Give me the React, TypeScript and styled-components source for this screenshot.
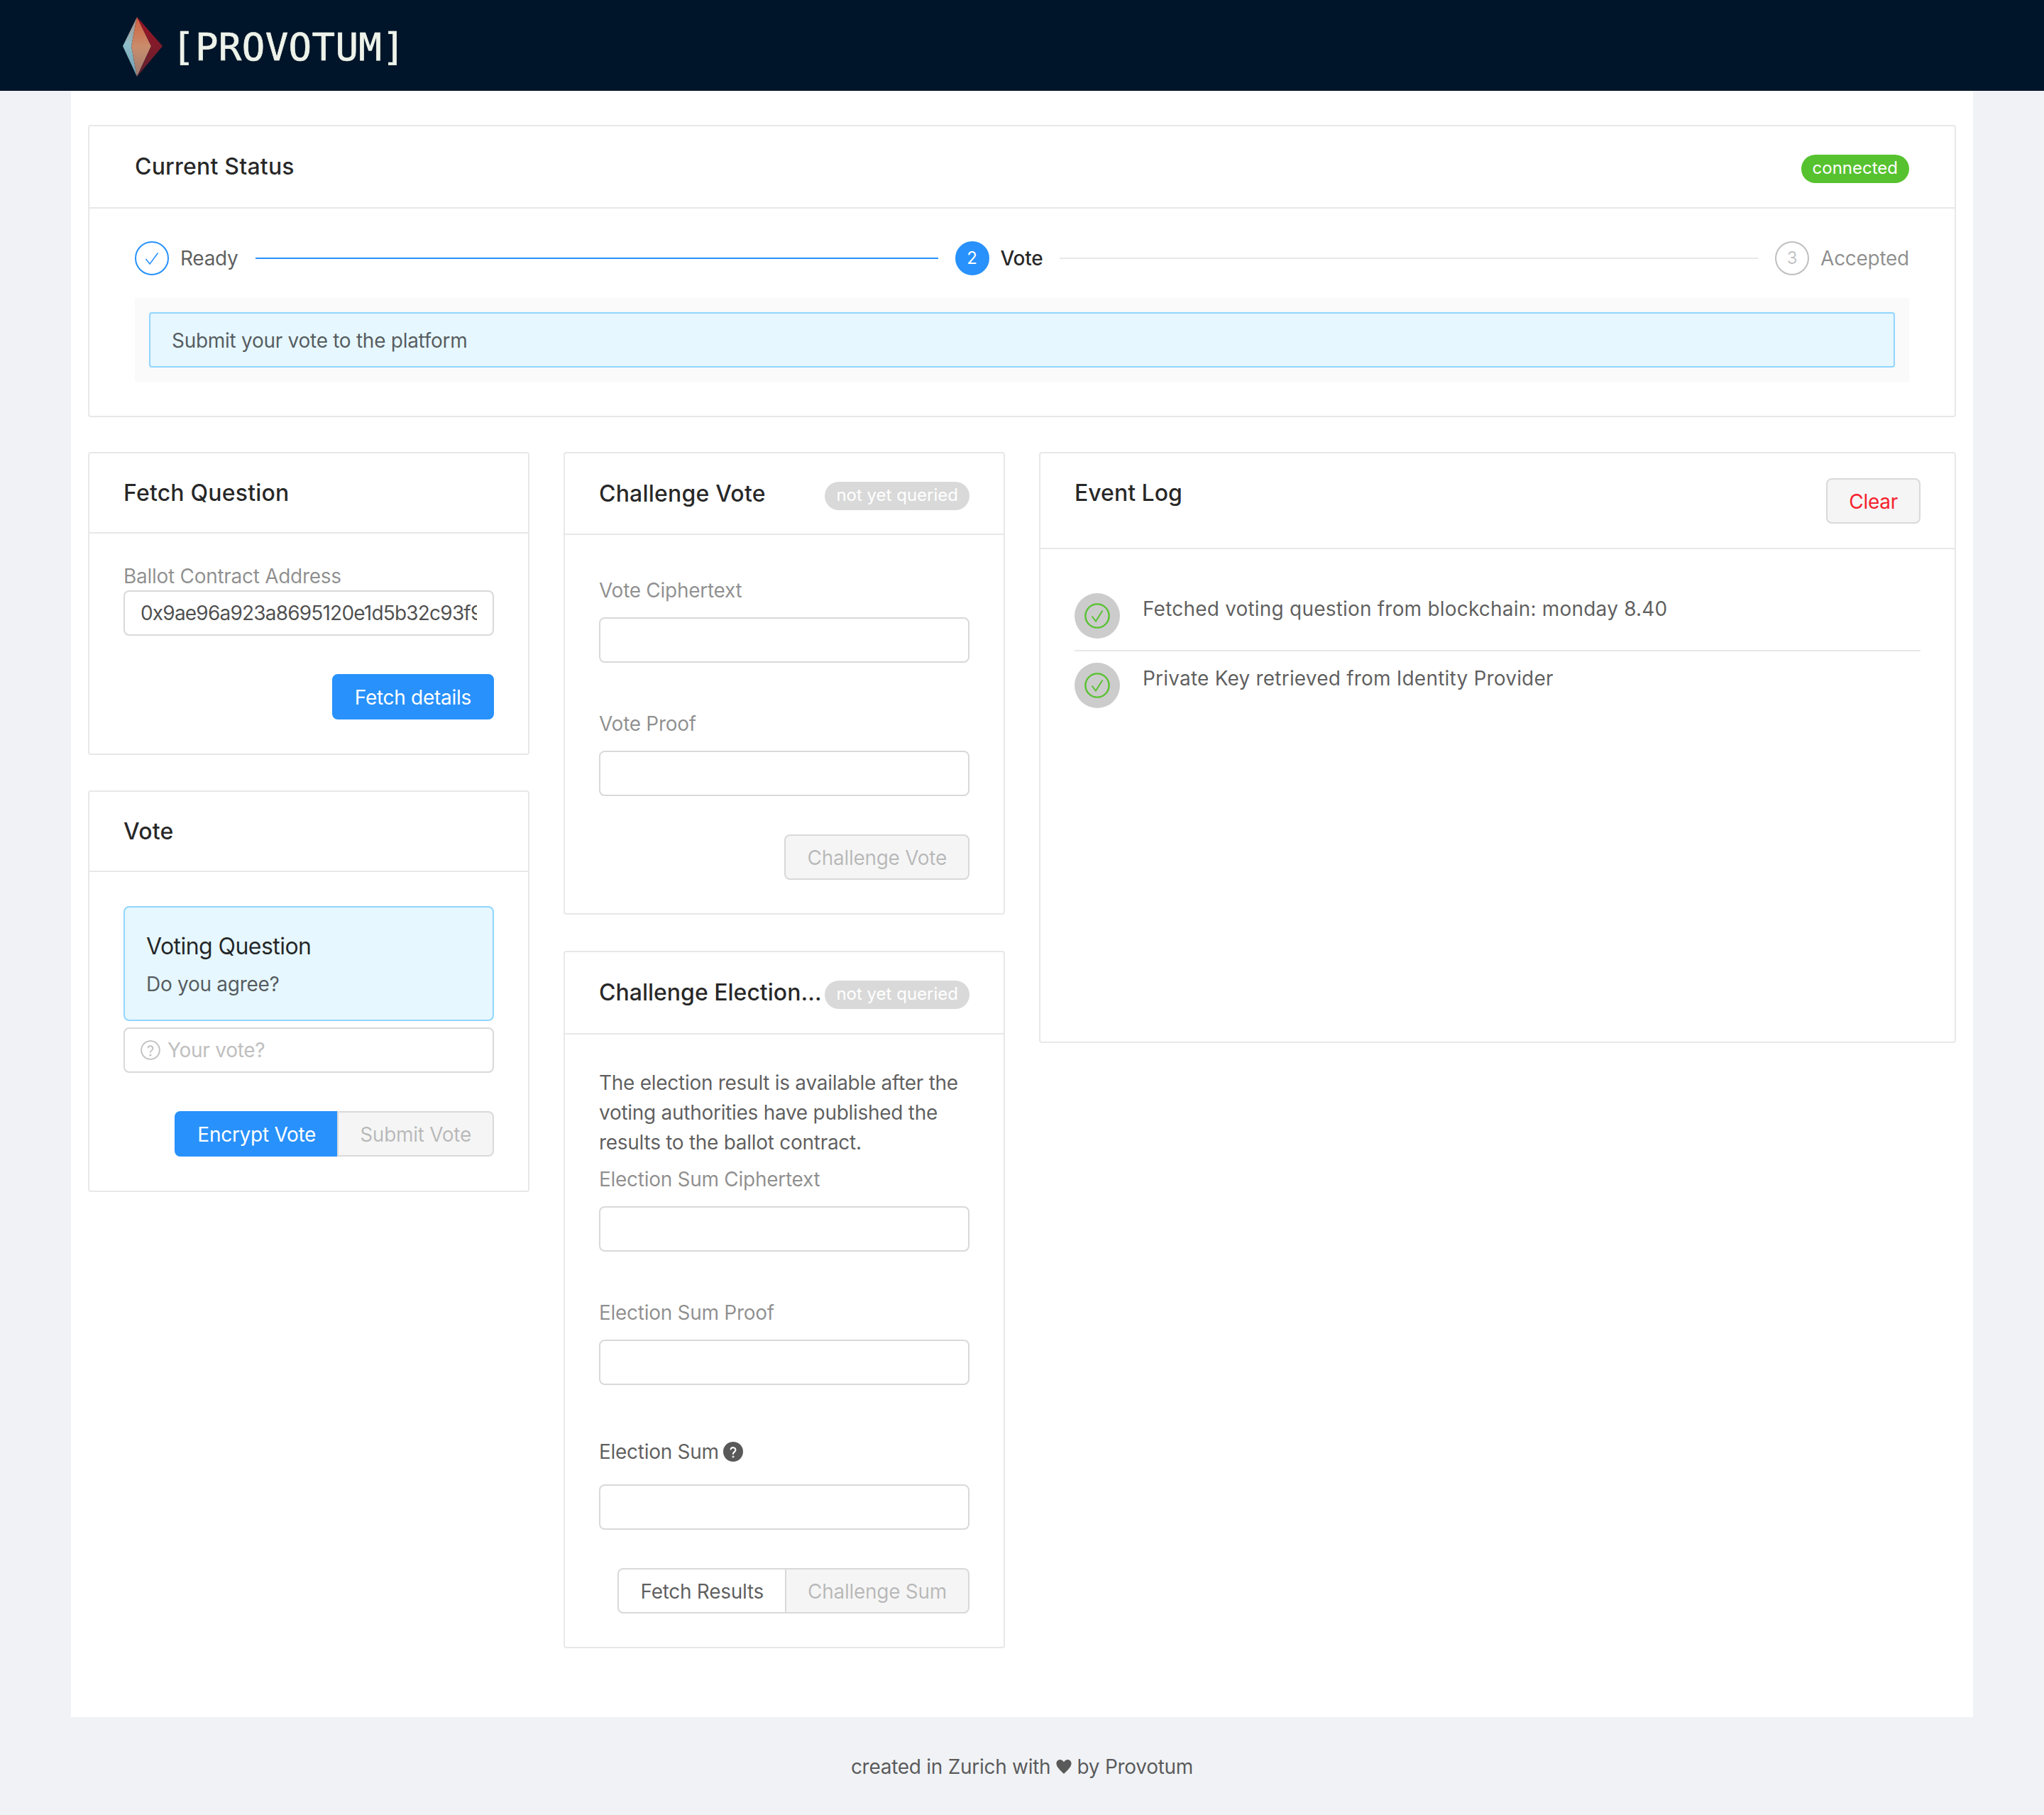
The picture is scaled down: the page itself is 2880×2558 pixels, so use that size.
import * as React from "react";
import styled, { createGlobalStyle } from "styled-components";

const GlobalStyle = createGlobalStyle`
    * { box-sizing: border-box; }
    html, body { margin: 0; padding: 0; background: #f0f2f5; }
    body {
        font-family: Inter, "Noto Sans", "Liberation Sans", sans-serif;
        font-size: 28px;
        line-height: 42px;
        letter-spacing: -0.28px;
        color: rgba(0,0,0,0.65);
    }
`;

const primary = "#2891fb";
const green = "#57c22f";

const Page = styled.div`
    width: 2880px;
    min-height: 2558px;
    display: flex;
    flex-direction: column;
`;

const Header = styled.header`
    height: 128px;
    background: #001529;
    display: flex;
    align-items: center;
    gap: 13px;
    padding-left: 173px;
`;

const LogoMark = styled.svg`
    margin-top: 4px;
    flex: none;
`;

const LogoText = styled.span`
    font-family: "DejaVu Sans Mono", "Liberation Mono", monospace;
    font-size: 54px;
    line-height: 60px;
    letter-spacing: 0.4px;
    color: #eef3ea;
    -webkit-text-stroke: 0.7px #eef3ea;
    margin-top: 6px;
`;

const Content = styled.main`
    margin: 0 100px;
    background: #fff;
    padding: 48px 24px 97px;
`;

const Card = styled.section<{ $minHeight?: number }>`
    background: #fff;
    border: 2px solid #e8e8e8;
    border-radius: 4px;
    min-height: ${(p) => (p.$minHeight ? `${p.$minHeight}px` : "auto")};
`;

const CardHead = styled.div<{ $height: number; $pad?: number }>`
    height: ${(p) => p.$height}px;
    padding: 0 ${(p) => p.$pad ?? 48}px;
    border-bottom: 2px solid #e8e8e8;
    display: flex;
    align-items: center;
    gap: 4px;
`;

const CardTitle = styled.div<{ $lift?: number; $track?: number }>`
    flex: 1;
    font-size: 32px;
    line-height: 44px;
    font-weight: 500;
    letter-spacing: ${(p) => p.$track ?? 0.2}px;
    color: rgba(0,0,0,0.85);
    white-space: nowrap;
    margin-bottom: ${(p) => p.$lift ?? 0}px;
`;

const Badge = styled.span<{ $color: string }>`
    flex: none;
    height: 40px;
    margin-top: 6px;
    padding: 0 16px;
    border-radius: 20px;
    background: ${(p) => p.$color};
    color: #fff;
    font-size: 24px;
    line-height: 38px;
    letter-spacing: 0;
`;

const StatusBody = styled.div`
    padding: 46px 64px 48px;
`;

const Steps = styled.div`
    display: flex;
    align-items: center;
    height: 48px;
    margin-bottom: 32px;
`;

const Step = styled.div<{ $grow?: boolean }>`
    display: flex;
    align-items: center;
    gap: 16px;
    flex: ${(p) => (p.$grow ? "1" : "none")};
`;

const StepIcon = styled.span<{ $state: "done" | "active" | "wait" }>`
    width: 48px;
    height: 48px;
    flex: none;
    border-radius: 50%;
    display: flex;
    align-items: center;
    justify-content: center;
    font-size: 24px;
    line-height: 1;
    border: 2px solid ${(p) => (p.$state === "wait" ? "rgba(0,0,0,0.25)" : primary)};
    background: ${(p) => (p.$state === "active" ? primary : "#fff")};
    color: ${(p) => (p.$state === "active" ? "#fff" : p.$state === "wait" ? "rgba(0,0,0,0.25)" : primary)};
`;

const StepLabel = styled.span<{ $state: "done" | "active" | "wait" }>`
    color: ${(p) => (p.$state === "active" ? "rgba(0,0,0,0.85)" : p.$state === "wait" ? "rgba(0,0,0,0.45)" : "rgba(0,0,0,0.65)")};
    font-weight: ${(p) => (p.$state === "active" ? 500 : 400)};
`;

const StepLine = styled.div<{ $done?: boolean }>`
    flex: 1;
    height: 2px;
    margin: 0 24px 0 8px;
    background: ${(p) => (p.$done ? primary : "#e8e8e8")};
`;

const AlertWrap = styled.div`
    background: #fafafa;
    padding: 20px;
`;

const StatusAlert = styled.div`
    height: 78px;
    background: #e6f7ff;
    border: 2px solid #91d5ff;
    border-radius: 4px;
    padding: 17px 30px;
`;

const Columns = styled.div`
    display: grid;
    grid-template-columns: 622px 622px 1fr;
    column-gap: 48px;
    margin-top: 49px;
    align-items: start;
`;

const Column = styled.div`
    display: flex;
    flex-direction: column;
`;

const Stack = styled.div<{ $top: number }>`
    margin-top: ${(p) => p.$top}px;
`;

const CardBody = styled.div<{ $top: number; $bottom?: number }>`
    padding: ${(p) => p.$top}px 48px ${(p) => p.$bottom ?? 47}px;
`;

const FieldLabel = styled.div<{ $gap?: number; $top?: number; $strong?: boolean; $nudge?: number }>`
    height: 42px;
    display: flex;
    align-items: center;
    gap: 6px;
    padding-top: ${(p) => p.$nudge ?? 0}px;
    margin-top: ${(p) => p.$top ?? 0}px;
    margin-bottom: ${(p) => p.$gap ?? 0}px;
    color: ${(p) => (p.$strong ? "rgba(0,0,0,0.65)" : "rgba(0,0,0,0.45)")};
`;

const TextInput = styled.input`
    display: block;
    width: 100%;
    height: 64px;
    padding: 0 22px;
    border: 2px solid #d9d9d9;
    border-radius: 8px;
    background: #fff;
    outline: none;
    font: inherit;
    letter-spacing: -0.8px;
    color: rgba(0,0,0,0.7);
`;

const PrefixInput = styled.div`
    height: 64px;
    margin-top: 9px;
    padding: 0 22px;
    border: 2px solid #d9d9d9;
    border-radius: 8px;
    display: flex;
    align-items: center;
    gap: 10px;
    color: #bfbfbf;
    input {
        flex: 1;
        min-width: 0;
        border: none;
        outline: none;
        padding: 0;
        font: inherit;
        letter-spacing: inherit;
        color: rgba(0,0,0,0.65);
        &::placeholder { color: #bfbfbf; opacity: 1; }
    }
`;

const Actions = styled.div`
    display: flex;
    justify-content: flex-end;
    margin-top: 54px;
`;

const Button = styled.button<{ $kind?: "primary" | "disabled" | "danger"; $joined?: "left" | "right" }>`
    height: 64px;
    padding: 2px 30px 0;
    font: inherit;
    letter-spacing: inherit;
    white-space: nowrap;
    border: 2px solid ${(p) => (p.$kind === "primary" ? primary : "#d9d9d9")};
    background: ${(p) => (p.$kind === "primary" ? primary : p.$kind === "disabled" ? "#f5f5f5" : p.$kind === "danger" ? "#f5f5f5" : "#fff")};
    color: ${(p) => (p.$kind === "primary" ? "#fff" : p.$kind === "disabled" ? "rgba(0,0,0,0.25)" : p.$kind === "danger" ? "#f5222d" : "rgba(0,0,0,0.65)")};
    border-radius: ${(p) => (p.$joined === "left" ? "8px 0 0 8px" : p.$joined === "right" ? "0 8px 8px 0" : "8px")};
    margin-left: ${(p) => (p.$joined === "right" ? "-2px" : "0")};
`;

const InfoBox = styled.div`
    height: 162px;
    padding: 33px 30px 0;
    background: #e6f7ff;
    border: 2px solid #91d5ff;
    border-radius: 8px;
`;

const InfoTitle = styled.div`
    font-size: 32px;
    line-height: 44px;
    letter-spacing: -0.55px;
    color: rgba(0,0,0,0.85);
    margin-bottom: 10px;
`;

const Paragraph = styled.p`
    margin: 0 0 10px;
`;

const EventList = styled.div`
    padding: 46px 48px 0;
`;

const EventRow = styled.div<{ $divider?: boolean }>`
    display: flex;
    gap: 32px;
    padding: 16px 0;
    letter-spacing: 0.2px;
    border-bottom: ${(p) => (p.$divider ? "2px solid #e8e8e8" : "none")};
`;

const EventText = styled.span`
    margin-top: 1px;
`;

const EventAvatar = styled.span`
    flex: none;
    width: 64px;
    height: 64px;
    border-radius: 50%;
    background: #ccc;
    display: flex;
    align-items: center;
    justify-content: center;
    color: ${green};
`;

const Footer = styled.footer`
    height: 138px;
    padding-top: 2px;
    display: flex;
    align-items: center;
    justify-content: center;
    white-space: pre;
`;

const HeartIcon = styled.svg`
    width: 22px;
    height: 22px;
    flex: none;
`;

const Logo = () => (
    <LogoMark width="56" height="84" viewBox="0 0 56 84">
        <defs>
            <linearGradient id="logoFront" x1="0" y1="0" x2="0" y2="1">
                <stop offset="0" stopColor="#cf5f3f" />
                <stop offset="0.5" stopColor="#c98d6c" />
                <stop offset="1" stopColor="#9c7b70" />
            </linearGradient>
            <linearGradient id="logoBack" x1="0" y1="0" x2="0" y2="1">
                <stop offset="0" stopColor="#a01424" />
                <stop offset="1" stopColor="#5e2230" />
            </linearGradient>
            <linearGradient id="logoSide" x1="0" y1="0" x2="0" y2="1">
                <stop offset="0" stopColor="#b08a80" />
                <stop offset="0.45" stopColor="#8fbdc9" />
                <stop offset="1" stopColor="#6f9db0" />
            </linearGradient>
        </defs>
        <polygon points="20,0 0,41 20,84 12,41" fill="url(#logoSide)" />
        <polygon points="20,0 12,41 20,84 40,41" fill="url(#logoFront)" />
        <polygon points="20,0 40,41 20,84 56,41" fill="url(#logoBack)" />
    </LogoMark>
);

const CheckMark = ({ size }: { size: number }) => (
    <svg width={size} height={size} viewBox="0 0 24 24" fill="none" stroke="currentColor" strokeWidth="1.6">
        <path d="M3.5 13l5.6 7L20.5 4.5" />
    </svg>
);

const CheckCircle = () => (
    <svg width="36" height="36" viewBox="0 0 36 36" fill="none" stroke="currentColor" strokeWidth="2.4">
        <circle cx="18" cy="18" r="16.6" />
        <path d="M10.5 18.5l5.5 7L25.5 10.5" strokeWidth="2" />
    </svg>
);

const QuestionOutline = () => (
    <svg width="28" height="28" viewBox="0 0 24 24" fill="none" stroke="currentColor" strokeWidth="1.6" strokeLinecap="round">
        <circle cx="12" cy="12" r="11" />
        <path d="M9.09 9a3 3 0 0 1 5.83 1c0 2-3 2.6-3 4.5" />
        <circle cx="12" cy="18" r="0.5" />
    </svg>
);

const QuestionFilled = () => (
    <svg width="28" height="28" viewBox="0 0 24 24" fill="none" stroke="#fff" strokeWidth="1.8" strokeLinecap="round">
        <circle cx="12" cy="12" r="12" fill="#595959" stroke="none" />
        <path d="M9.09 9a3 3 0 0 1 5.83 1c0 2-3 2.6-3 4.5" />
        <circle cx="12" cy="18" r="0.4" />
    </svg>
);

const Heart = () => (
    <HeartIcon viewBox="0 0 24 24" fill="#595959">
        <path d="M12 23C7 17.5 0.5 12.500 0.500 7C0.500 3.500 3 1 6.200 1C8.600 1 10.800 2.400 12 5C13.200 2.400 15.400 1 17.800 1C21 1 23.500 3.500 23.500 7C23.500 12.500 17 17.500 12 23Z" />
    </HeartIcon>
);

const App = () => {
    return (
        <Page>
            <GlobalStyle />
            <Header>
                <Logo />
                <LogoText>[PROVOTUM]</LogoText>
            </Header>
            <Content>
                <Card>
                    <CardHead $height={116} $pad={64}>
                        <CardTitle>Current Status</CardTitle>
                        <Badge $color={green}>connected</Badge>
                    </CardHead>
                    <StatusBody>
                        <Steps>
                            <Step $grow>
                                <StepIcon $state="done"><CheckMark size={24} /></StepIcon>
                                <StepLabel $state="done">Ready</StepLabel>
                                <StepLine $done />
                            </Step>
                            <Step $grow>
                                <StepIcon $state="active">2</StepIcon>
                                <StepLabel $state="active">Vote</StepLabel>
                                <StepLine />
                            </Step>
                            <Step>
                                <StepIcon $state="wait">3</StepIcon>
                                <StepLabel $state="wait">Accepted</StepLabel>
                            </Step>
                        </Steps>
                        <AlertWrap>
                            <StatusAlert>Submit your vote to the platform</StatusAlert>
                        </AlertWrap>
                    </StatusBody>
                </Card>
                <Columns>
                    <Column>
                        <Card>
                            <CardHead $height={113}>
                                <CardTitle>Fetch Question</CardTitle>
                            </CardHead>
                            <CardBody $top={38} $bottom={48}>
                                <FieldLabel $nudge={2}>Ballot Contract Address</FieldLabel>
                                <TextInput readOnly value="0x9ae96a923a8695120e1d5b32c93f9c2e71b4d0a8" />
                                <Actions>
                                    <Button $kind="primary">Fetch details</Button>
                                </Actions>
                            </CardBody>
                        </Card>
                        <Stack $top={50}>
                            <Card>
                                <CardHead $height={113}>
                                    <CardTitle>Vote</CardTitle>
                                </CardHead>
                                <CardBody $top={48} $bottom={48}>
                                    <InfoBox>
                                        <InfoTitle>Voting Question</InfoTitle>
                                        Do you agree?
                                    </InfoBox>
                                    <PrefixInput>
                                        <QuestionOutline />
                                        <input placeholder="Your vote?" />
                                    </PrefixInput>
                                    <Actions>
                                        <Button $kind="primary" $joined="left">Encrypt Vote</Button>
                                        <Button $kind="disabled" $joined="right">Submit Vote</Button>
                                    </Actions>
                                </CardBody>
                            </Card>
                        </Stack>
                    </Column>
                    <Column>
                        <Card>
                            <CardHead $height={115}>
                                <CardTitle>Challenge Vote</CardTitle>
                                <Badge $color="#d9d9d9">not yet queried</Badge>
                            </CardHead>
                            <CardBody $top={57}>
                                <FieldLabel $gap={17}>Vote Ciphertext</FieldLabel>
                                <TextInput />
                                <FieldLabel $top={65} $gap={17}>Vote Proof</FieldLabel>
                                <TextInput />
                                <Actions>
                                    <Button $kind="disabled">Challenge Vote</Button>
                                </Actions>
                            </CardBody>
                        </Card>
                        <Stack $top={51}>
                            <Card>
                                <CardHead $height={116}>
                                    <CardTitle $track={0}>Challenge Election…</CardTitle>
                                    <Badge $color="#d9d9d9">not yet queried</Badge>
                                </CardHead>
                                <CardBody $top={47}>
                                    <Paragraph>The election result is available after the voting authorities have published the results to the ballot contract.</Paragraph>
                                    <FieldLabel $gap={17}>Election Sum Ciphertext</FieldLabel>
                                    <TextInput />
                                    <FieldLabel $top={65} $gap={17}>Election Sum Proof</FieldLabel>
                                    <TextInput />
                                    <FieldLabel $top={73} $gap={25} $strong>Election Sum <QuestionFilled /></FieldLabel>
                                    <TextInput />
                                    <Actions>
                                        <Button $joined="left">Fetch Results</Button>
                                        <Button $kind="disabled" $joined="right">Challenge Sum</Button>
                                    </Actions>
                                </CardBody>
                            </Card>
                        </Stack>
                    </Column>
                    <Column>
                        <Card $minHeight={833}>
                            <CardHead $height={135}>
                                <CardTitle $lift={22} $track={0}>Event Log</CardTitle>
                                <Button $kind="danger">Clear</Button>
                            </CardHead>
                            <EventList>
                                <EventRow $divider>
                                    <EventAvatar><CheckCircle /></EventAvatar>
                                    <EventText>Fetched voting question from blockchain: monday 8.40</EventText>
                                </EventRow>
                                <EventRow>
                                    <EventAvatar><CheckCircle /></EventAvatar>
                                    <EventText>Private Key retrieved from Identity Provider</EventText>
                                </EventRow>
                            </EventList>
                        </Card>
                    </Column>
                </Columns>
            </Content>
            <Footer>
                created in Zurich with <Heart /> by Provotum
            </Footer>
        </Page>
    );
};

export default App;
